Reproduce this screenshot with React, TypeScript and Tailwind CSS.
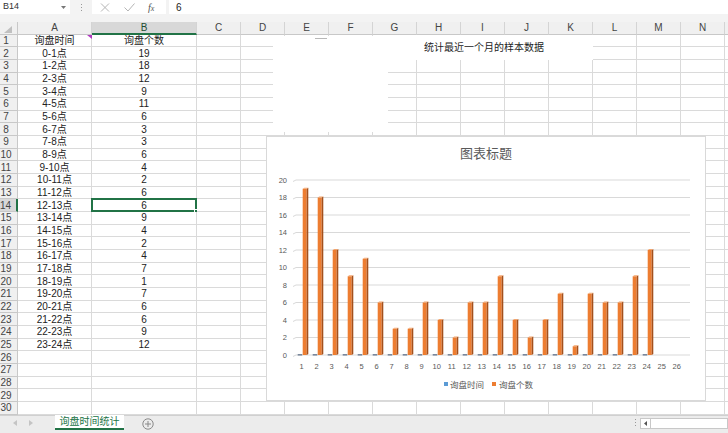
import clsx from 'clsx';

const data: [string, number][] = [
  ['0-1点', 19],
  ['1-2点', 18],
  ['2-3点', 12],
  ['3-4点', 9],
  ['4-5点', 11],
  ['5-6点', 6],
  ['6-7点', 3],
  ['7-8点', 3],
  ['8-9点', 6],
  ['9-10点', 4],
  ['10-11点', 2],
  ['11-12点', 6],
  ['12-13点', 6],
  ['13-14点', 9],
  ['14-15点', 4],
  ['15-16点', 2],
  ['16-17点', 4],
  ['17-18点', 7],
  ['18-19点', 1],
  ['19-20点', 7],
  ['20-21点', 6],
  ['21-22点', 6],
  ['22-23点', 9],
  ['23-24点', 12],
];

const cols = [
  { k: 'A', w: 'w-[74px]' },
  { k: 'B', w: 'w-[105px]' },
  { k: 'C', w: 'w-[44px]' },
  { k: 'D', w: 'w-[44px]' },
  { k: 'E', w: 'w-[44px]' },
  { k: 'F', w: 'w-[44px]' },
  { k: 'G', w: 'w-[44px]' },
  { k: 'H', w: 'w-[44px]' },
  { k: 'I', w: 'w-[44px]' },
  { k: 'J', w: 'w-[44px]' },
  { k: 'K', w: 'w-[44px]' },
  { k: 'L', w: 'w-[44px]' },
  { k: 'M', w: 'w-[44px]' },
  { k: 'N', w: 'w-[44px]' },
];

const FormulaBar = () => (
  <div className="h-[22px] bg-[#f3f3f3] flex items-start">
    <div className="w-[70px] h-[14px] bg-white flex items-center justify-between pl-[3px] pr-[4px] text-[9px] text-[#333]">
      <span>B14</span>
      <svg width="5" height="3" viewBox="0 0 5 3">
        <path d="M0 0 L5 0 L2.5 3 Z" fill="#777" />
      </svg>
    </div>
    <div className="w-[22px] h-[14px] flex flex-col items-center justify-center gap-[2px]">
      <div className="w-[1px] h-[1px] bg-[#999]" />
      <div className="w-[1px] h-[1px] bg-[#999]" />
      <div className="w-[1px] h-[1px] bg-[#999]" />
    </div>
    <div className="w-[74px] h-[14px] bg-white flex items-center">
      <svg className="ml-[8px]" width="10" height="9" viewBox="0 0 10 9">
        <path d="M1 0.5 L9 8.5 M9 0.5 L1 8.5" stroke="#b5b5b5" strokeWidth="1" />
      </svg>
      <svg className="ml-[14px]" width="11" height="9" viewBox="0 0 11 9">
        <path d="M0.5 4.5 L4 8 L10.5 0.5" stroke="#b5b5b5" strokeWidth="1" fill="none" />
      </svg>
      <span className="ml-[13px] text-[10px] italic text-[#555] font-['Liberation_Serif',serif]">
        f<span className="text-[8px]">x</span>
      </span>
    </div>
    <div className="ml-[3px] flex-1 h-[14px] bg-white flex items-center pl-[7px] text-[10px] text-[#222]">6</div>
  </div>
);

const HeaderRow = () => (
  <div className="flex h-[12.66px]">
    <div className="w-[18px] shrink-0 bg-[#f0f0f0] border-r border-b border-[#c8c8c8] flex items-end justify-end pr-[5px] pb-[1px]">
      <svg width="8" height="7" viewBox="0 0 8 7">
        <path d="M8 0 L8 7 L0 7 Z" fill="#c0c0c0" />
      </svg>
    </div>
    {cols.map((c) => (
      <div
        key={c.k}
        className={clsx(
          c.w,
          'shrink-0 border-r border-[#d4d4d4] flex items-center justify-center text-[10px] leading-[11px]',
          c.k === 'B'
            ? 'bg-[#d8d8d8] border-b-2 border-b-[#217346] text-[#1d4d33]'
            : 'bg-[#f0f0f0] border-b border-b-[#c8c8c8] text-[#444]'
        )}
      >
        {c.k}
      </div>
    ))}
    <div className="flex-1 bg-[#f0f0f0] border-b border-[#c8c8c8]" />
  </div>
);

const Row = ({ n }: { n: number }) => {
  const d = n >= 2 && n <= 25 ? data[n - 2] : null;
  const sel = n === 14;
  return (
    <div className="flex h-[12.68px]">
      <div
        className={clsx(
          'w-[18px] shrink-0 border-b pr-[5px] flex items-center justify-center text-[10px] leading-[11px] text-[#444]',
          sel
            ? 'bg-[#d8d8d8] border-b-[#c8c8c8] border-r-2 border-r-[#217346] text-[#1d4d33]'
            : 'bg-[#f0f0f0] border-r border-[#c8c8c8]'
        )}
      >
        {n}
      </div>
      {cols.map((c) => {
        let v: string | number = '';
        if (c.k === 'A') v = n === 1 ? '询盘时间' : d ? d[0] : '';
        if (c.k === 'B') v = n === 1 ? '询盘个数' : d ? d[1] : '';
        return (
          <div
            key={c.k}
            className={clsx(
              c.w,
              'relative shrink-0 border-r border-b border-[#dadada] flex items-center justify-center text-[10px] leading-[11px] text-[#222] whitespace-nowrap'
            )}
          >
            {v}
            {sel && c.k === 'B' && (
              <div className="absolute -left-px -top-px -right-px -bottom-px border-2 border-[#217346]">
                <div className="absolute -right-[3px] -bottom-[3px] w-[4px] h-[4px] bg-[#217346] border border-white" />
              </div>
            )}
          </div>
        );
      })}
      <div className="flex-1 border-b border-[#dadada]" />
    </div>
  );
};

const Chart = () => {
  const base = 218;
  const unit = 8.75;
  const ticks = [0, 2, 4, 6, 8, 10, 12, 14, 16, 18, 20];
  return (
    <div className="absolute left-[266px] top-[136px] w-[440px] h-[265px] bg-white border border-[#d9d9d9]">
      <svg width="438" height="263" className="block">
        <text x="219" y="21" textAnchor="middle" fontSize="13" fill="#595959">
          图表标题
        </text>
        {ticks.map((t) => (
          <g key={t}>
            <line x1="29" x2="423" y1={base - t * unit} y2={base - t * unit} stroke="#d9d9d9" strokeWidth="1" />
            <line x1="26" x2="29" y1={base - t * unit + 1.5} y2={base - t * unit} stroke="#d9d9d9" strokeWidth="1" />
            <text x="20" y={base - t * unit + 2.7} textAnchor="end" fontSize="7.5" fill="#595959">
              {t}
            </text>
          </g>
        ))}
        {data.map(([, v], i) => {
          const c = 38.5 + i * 15;
          const x = c - 2.8;
          const top = base - v * unit;
          return (
            <g key={i}>
              <rect x={x - 5} y={base - 1} width="4.5" height="1.6" fill="#7a889c" />
              <rect x={x} y={top} width="4" height={base - top} fill="#ED7D31" />
              <polygon
                points={`${x + 4},${top} ${x + 5.6},${top - 1} ${x + 5.6},${base - 1} ${x + 4},${base}`}
                fill="#a4501c"
              />
              <polygon
                points={`${x},${top} ${x + 1.6},${top - 1} ${x + 5.6},${top - 1} ${x + 4},${top}`}
                fill="#f3a56d"
              />
            </g>
          );
        })}
        {Array.from({ length: 26 }, (_, i) => (
          <text key={i} x={34.7 + i * 15} y="232" textAnchor="middle" fontSize="7.5" fill="#595959">
            {i + 1}
          </text>
        ))}
        <rect x="177" y="245" width="4" height="4" fill="#5B9BD5" />
        <text x="183" y="251" fontSize="8.5" fill="#595959">
          询盘时间
        </text>
        <rect x="225" y="245" width="4" height="4" fill="#ED7D31" />
        <text x="232" y="251" fontSize="8.5" fill="#595959">
          询盘个数
        </text>
      </svg>
    </div>
  );
};

const TabBar = () => (
  <div className="h-[18px] bg-[#ececec] border-t border-[#d0d0d0] flex items-start">
    <div className="w-[55px] h-[14px] flex items-center">
      <svg className="ml-[13px]" width="4" height="6" viewBox="0 0 4 6">
        <path d="M4 0 L0 3 L4 6 Z" fill="#c4c4c4" />
      </svg>
      <svg className="ml-[12px]" width="4" height="6" viewBox="0 0 4 6">
        <path d="M0 0 L4 3 L0 6 Z" fill="#c4c4c4" />
      </svg>
    </div>
    <div className="w-[69px] h-[15px] -mt-px bg-white border-b-2 border-[#217346] flex items-center justify-center text-[10px] text-[#217346]">
      询盘时间统计
    </div>
    <svg className="ml-[18px] mt-[2px]" width="12" height="12" viewBox="0 0 12 12">
      <circle cx="6" cy="6" r="5.2" stroke="#8a8a8a" strokeWidth="1" fill="none" />
      <path d="M6 3 V9 M3 6 H9" stroke="#8a8a8a" strokeWidth="1" />
    </svg>
    <div className="flex-1" />
    <div className="w-[6px] h-[14px] flex flex-col items-center justify-center gap-[2px]">
      <div className="w-[1px] h-[1px] bg-[#999]" />
      <div className="w-[1px] h-[1px] bg-[#999]" />
      <div className="w-[1px] h-[1px] bg-[#999]" />
    </div>
    <div className="ml-[2px] mt-[2px] w-[11px] h-[11px] bg-white border border-[#c8c8c8] flex items-center justify-center">
      <svg width="3" height="5" viewBox="0 0 3 5">
        <path d="M3 0 L0 2.5 L3 5 Z" fill="#555" />
      </svg>
    </div>
    <div className="mt-[2px] w-[77px] h-[11px] bg-white border border-l-0 border-[#c8c8c8]" />
  </div>
);

export default function App() {
  return (
    <div className="relative w-[728px] h-[433px] overflow-hidden bg-white font-['Liberation_Sans','Noto_Sans_CJK_SC',sans-serif]">
      <FormulaBar />
      <HeaderRow />
      {Array.from({ length: 30 }, (_, i) => (
        <Row key={i} n={i + 1} />
      ))}
      <TabBar />

      {/* comment marker on A1 */}
      <svg className="absolute left-[87px] top-[35px]" width="5" height="4" viewBox="0 0 5 4">
        <path d="M0 0 L5 0 L5 4 Z" fill="#b03ac0" />
      </svg>

      {/* leftover white shapes */}
      <div className="absolute left-[273px] top-[36px] w-[115px] h-[96px] bg-white" />
      <div className="absolute left-[315px] top-[38px] w-[12px] h-px bg-[#b8b8b8]" />
      <div className="absolute left-[388px] top-[35px] w-[205px] h-[25px] bg-white flex items-center pl-[36px] text-[10px] text-[#222] whitespace-nowrap">
        统计最近一个月的样本数据
      </div>

      <Chart />
    </div>
  );
}
